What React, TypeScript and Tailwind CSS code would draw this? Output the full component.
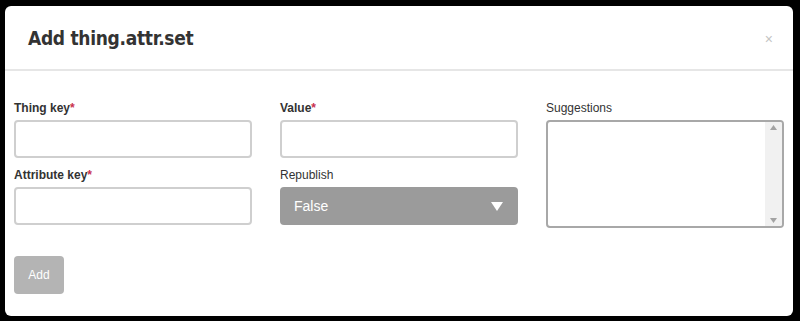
import * as React from 'react'

const Label = ({ text, required }: { text: string, required?: boolean }) => (
  <label className={`block h-[17px] text-[12px] leading-[17px] text-[#333] ${required ? 'font-bold' : ''}`}>
    {text}
    {required && <span className="text-[#c9304e]">*</span>}
  </label>
)

const TextInput = () => (
  <input type="text" className="block h-[38px] w-full rounded-[4px] border-2 border-[#cfcfcf] bg-white px-2 outline-none" />
)

export default function App() {
  return (
    <div className="h-[321px] w-[800px] bg-black pl-[5px] pt-[6px] font-['Liberation_Sans',Arial,sans-serif]">
      <div className="h-[310px] w-[788px] rounded-[6px] bg-white">
        {/* header */}
        <div className="flex h-[65px] items-center justify-between border-b-2 border-[#e6e6e6] pl-[23px] pr-[20px] pt-[2px]">
          <h4 className="font-['DejaVu_Sans_Condensed',sans-serif] text-[19px] font-bold tracking-[-0.3px] text-[#333]">
            Add thing.attr.set
          </h4>
          <button className="text-[14px] leading-none text-[#c4c4c4]">×</button>
        </div>

        {/* body */}
        <div className="px-[9px] pt-[29px]">
          <div className="grid grid-cols-3 gap-x-[28px]">
            <div className="flex flex-col">
              <Label text="Thing key" required />
              <div className="mt-[3px]"><TextInput /></div>
              <div className="mt-[9px]"><Label text="Attribute key" required /></div>
              <div className="mt-[3px]"><TextInput /></div>
            </div>
            <div className="flex flex-col">
              <Label text="Value" required />
              <div className="mt-[3px]"><TextInput /></div>
              <div className="mt-[9px]"><Label text="Republish" /></div>
              <div className="mt-[3px] flex h-[38px] items-center justify-between rounded-[4px] bg-[#9b9b9b] pl-[14px] pr-[15px] text-[14px] text-white">
                <span>False</span>
                <svg width="12" height="9" viewBox="0 0 12 9"><path d="M0 0h12L6 9z" fill="#fff" /></svg>
              </div>
            </div>
            <div className="flex flex-col">
              <Label text="Suggestions" />
              <div className="mt-[3px] flex h-[108px] overflow-hidden rounded-[4px] border-2 border-[#a8a8a8] bg-white">
                <div className="flex-1" />
                <div className="flex w-[17px] flex-col items-center justify-between bg-[#f1f1f1] py-[3px]">
                  <svg width="7" height="5" viewBox="0 0 7 5"><path d="M0 5h7L3.5 0z" fill="#a3a3a3" /></svg>
                  <svg width="7" height="5" viewBox="0 0 7 5"><path d="M0 0h7L3.5 5z" fill="#a3a3a3" /></svg>
                </div>
              </div>
            </div>
          </div>

          <button className="mt-[28px] h-[38px] w-[50px] rounded-[4px] bg-[#b4b4b4] text-[12px] text-white">
            Add
          </button>
        </div>
      </div>
    </div>
  )
}
